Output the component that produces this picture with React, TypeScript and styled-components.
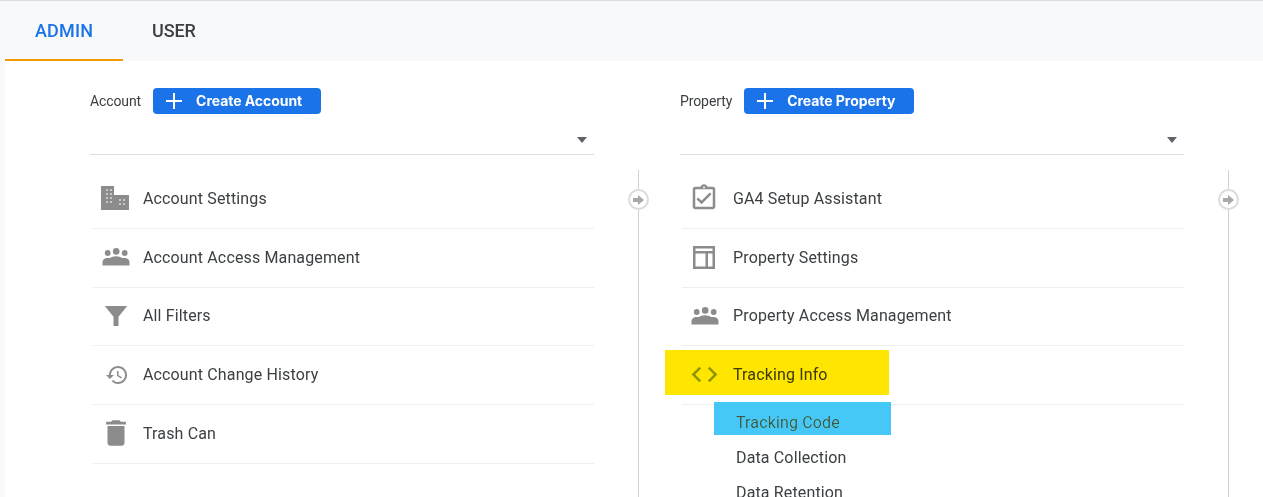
import styled, { createGlobalStyle } from 'styled-components'

const GlobalStyle = createGlobalStyle`
  html, body {
    margin: 0;
    height: 497px;
    overflow: hidden;
    background: #f8f9fa;
    font-family: Roboto, "Liberation Sans", sans-serif;
  }
`

const TabBar = styled.div`
  display: flex;
  height: 60px;
  padding-left: 5px;
  border-top: 1px solid #dadce0;
`

const Tab = styled.div<{ $active?: boolean }>`
  display: flex;
  align-items: center;
  padding: 0 30px;
  font-size: 18px;
  font-weight: 500;
  letter-spacing: ${(p) => (p.$active ? '0.15px' : '-0.1px')};
  color: ${(p) => (p.$active ? '#1a73e8' : '#3c4043')};
  border-bottom: 2px solid ${(p) => (p.$active ? '#f29900' : 'transparent')};

  & + & {
    padding-left: 29px;
  }
`

const Panel = styled.div`
  display: flex;
  height: 436px;
  margin-left: 5px;
  padding: 27px 0 0 85px;
  background: #fff;
`

const Column = styled.section`
  width: 590px;
  flex: none;
`

const ColumnHead = styled.div`
  display: flex;
  align-items: center;
  width: 504px;
  height: 26px;
`

const HeadLabel = styled.span`
  font-size: 14px;
  letter-spacing: -0.1px;
  color: #3c4043;
  margin-right: 12px;
`

const CreateButton = styled.div`
  display: flex;
  align-items: center;
  height: 26px;
  padding: 0 19px 2px 12px;
  box-sizing: border-box;
  border-radius: 4px;
  background: #1a73e8;
  color: #fff;
  font-family: Inter, Roboto, sans-serif;
  font-size: 14px;
  font-weight: 700;
  letter-spacing: -0.05px;

  svg {
    margin: 2px 13px 0 0;
  }
`

const Select = styled.div`
  display: flex;
  align-items: center;
  justify-content: flex-end;
  box-sizing: border-box;
  width: 504px;
  height: 25px;
  margin-top: 16px;
  padding: 0 7px 4px 0;
  border-bottom: 1px solid #dadce0;

  &::after {
    content: '';
    border-style: solid;
    border-width: 6px 5px 0;
    border-color: #5f6368 transparent transparent;
  }
`

const Body = styled.div`
  display: flex;
  margin-top: 15px;
`

const List = styled.div`
  box-sizing: border-box;
  width: 504px;
  padding-left: 2px;
`

const Row = styled.div`
  position: relative;
  display: flex;
  align-items: center;
  box-sizing: border-box;
  height: 58.75px;
  padding-bottom: 1px;
  border-bottom: 1px solid #eeeff0;
  font-size: 16px;
  letter-spacing: 0.14px;
  color: #3c4043;
`

// $w moves the icon sideways, the label stays at 51px from the row start
const IconSlot = styled.span<{ $w?: number; $color?: string }>`
  display: flex;
  align-items: center;
  justify-content: center;
  width: ${(p) => p.$w ?? 48}px;
  margin-right: ${(p) => 51 - (p.$w ?? 48)}px;
  color: ${(p) => p.$color ?? '#8c8c8c'};

  svg {
    display: block;
    flex: none;
    fill: currentColor;
  }
`

const SubRow = styled.div<{ $color?: string }>`
  position: relative;
  display: flex;
  align-items: center;
  height: 35px;
  padding-left: 54px;
  font-size: 16px;
  letter-spacing: 0.14px;
  color: ${(p) => p.$color ?? '#3c4043'};
`

// marker strokes someone painted on the screenshot, they tint the text below
const Marker = styled.span<{
  $color: string
  $left: number
  $top: number
  $w: number
  $h: number
  $blend: string
}>`
  position: absolute;
  left: ${(p) => p.$left}px;
  top: ${(p) => p.$top}px;
  width: ${(p) => p.$w}px;
  height: ${(p) => p.$h}px;
  background: ${(p) => p.$color};
  mix-blend-mode: ${(p) => p.$blend};
`

const Connector = styled.div`
  position: relative;
  flex: none;
  box-sizing: border-box;
  width: 45px;
  height: 330px;
  border-right: 1px solid #d0d2d4;
`

const ConnectorDot = styled.span`
  position: absolute;
  top: 19px;
  right: -11px;
  display: flex;
  align-items: center;
  justify-content: center;
  box-sizing: border-box;
  width: 21px;
  height: 21px;
  border: 2px solid #dadce0;
  border-radius: 50%;
  background: #fff;
  color: #a8a8a8;
`

const Plus = () => (
  <svg width='18' height='18' viewBox='0 0 18 18' fill='none' stroke='#fff' strokeWidth='2'>
    <path d='M9 1v16M1 9h16' />
  </svg>
)

const Arrow = () => (
  <svg width='11' height='10' viewBox='0 0 11 10' fill='currentColor'>
    <path d='M0 3h5V0l6 5-6 5V7H0z' />
  </svg>
)

const Domain = () => (
  <svg width='28' height='24' viewBox='0 0 28 24'>
    <path d='M0 0h13v9h15v15H0z' />
    <path
      d='M5 3h2v2H5zM9 3h2v2H9zM5 7h2v2H5zM9 7h2v2H9zM5 11h2v2H5zM9 11h2v2H9zM5 15h2v2H5zM9 15h2v2H9zM18 13h2v2h-2zM22 13h2v2h-2zM18 17h2v2h-2zM22 17h2v2h-2z'
      fill='#c8c8c8'
    />
  </svg>
)

const Groups = () => (
  <svg width='28' height='18' viewBox='0 0 28 18'>
    <circle cx='5.7' cy='5' r='2.9' />
    <circle cx='14.2' cy='3.4' r='3.3' />
    <circle cx='22.7' cy='5' r='2.900' />
    <path d='M.5 17.500v-3.500c0-2.200 2.300-4 5-4h2.500c1.500-1 3.800-1.700 6-1.700s4.500.7 6 1.700h2.500c2.700 0 5 1.800 5 4v3.500z' />
  </svg>
)

const Funnel = () => (
  <svg width='30' height='30' viewBox='0 0 24 24'>
    <path d='M3 4h18l-7 8.500V20h-4v-7.500z' />
  </svg>
)

const History = () => (
  <svg width='24' height='24' viewBox='0 0 24 24'>
    <path d='M13 3c-4.970 0-9 4.030-9 9H1l3.890 3.890.07.14L9 12H6c0-3.870 3.130-7 7-7s7 3.130 7 7-3.130 7-7 7c-1.930 0-3.680-.79-4.940-2.060l-1.420 1.420C8.270 19.990 10.510 21 13 21c4.970 0 9-4.030 9-9s-4.030-9-9-9zm-1 5v5l4.280 2.540.72-1.210-3.500-2.080V8H12z' />
  </svg>
)

const Trash = () => (
  <svg width='34' height='34' viewBox='0 0 24 24'>
    <path d='M6 19c0 1.100.9 2 2 2h8c1.100 0 2-.9 2-2V7H6v12zM19 4h-3.500l-1-1h-5l-1 1H5v2h14V4z' />
  </svg>
)

const Clipboard = () => (
  <svg width='30' height='30' viewBox='0 0 24 24'>
    <path d='M18 9l-1.410-1.420L10 14.170l-2.590-2.580L6 13l4 4zm1-6h-4.180C14.400 1.840 13.300 1 12 1c-1.300 0-2.400.84-2.820 2H5c-1.100 0-2 .9-2 2v14c0 1.100.9 2 2 2h14c1.100 0 2-.9 2-2V5c0-1.100-.9-2-2-2zm-7-.25c.41 0 .75.34.75.75s-.34.75-.75.75-.75-.34-.75-.75.34-.75.75-.75zM19 19H5V5h14v14z' />
  </svg>
)

const LayoutIcon = () => (
  <svg width='24' height='24' viewBox='0 0 24 24'>
    <path d='M1 1h22v23H1zM3.500 3.500v2.500h17V3.500zM3.500 8.500v13h10v-13zM16 8.500v13h4.500v-13z' fillRule='evenodd' />
  </svg>
)

const Code = () => (
  <svg width='31' height='31' viewBox='0 0 24 24'>
    <path d='M9.400 16.600L4.800 12l4.600-4.600L8 6l-6 6 6 6 1.400-1.400zm5.200 0l4.600-4.600-4.600-4.600L16 6l6 6-6 6-1.400-1.400z' />
  </svg>
)

const accountRows = [
  { label: 'Account Settings', icon: <Domain />, iconWidth: 46 },
  { label: 'Account Access Management', icon: <Groups /> },
  { label: 'All Filters', icon: <Funnel /> },
  { label: 'Account Change History', icon: <History />, iconWidth: 50 },
  { label: 'Trash Can', icon: <Trash /> },
]

const App = () => (
  <>
    <GlobalStyle />
    <TabBar>
      <Tab $active>ADMIN</Tab>
      <Tab>USER</Tab>
    </TabBar>
    <Panel>
      <Column>
        <ColumnHead>
          <HeadLabel>Account</HeadLabel>
          <CreateButton>
            <Plus />
            Create Account
          </CreateButton>
        </ColumnHead>
        <Select />
        <Body>
          <List>
            {accountRows.map((row) => (
              <Row key={row.label}>
                <IconSlot $w={row.iconWidth}>{row.icon}</IconSlot>
                {row.label}
              </Row>
            ))}
          </List>
          <Connector>
            <ConnectorDot>
              <Arrow />
            </ConnectorDot>
          </Connector>
        </Body>
      </Column>
      <Column>
        <ColumnHead>
          <HeadLabel>Property</HeadLabel>
          <CreateButton>
            <Plus />
            Create Property
          </CreateButton>
        </ColumnHead>
        <Select />
        <Body>
          <List>
            <Row>
              <IconSlot $w={44}>
                <Clipboard />
              </IconSlot>
              GA4 Setup Assistant
            </Row>
            <Row>
              <IconSlot $w={44}>
                <LayoutIcon />
              </IconSlot>
              Property Settings
            </Row>
            <Row>
              <IconSlot $w={46}>
                <Groups />
              </IconSlot>
              Property Access Management
            </Row>
            <Row>
              <IconSlot $w={44} $color='#8ca800'>
                <Code />
              </IconSlot>
              Tracking Info
              <Marker $color='#ffe600' $blend='multiply' $left={-17} $top={4} $w={224} $h={45} />
            </Row>
            <SubRow $color='#3f524c'>
              Tracking Code
              <Marker $color='#45c8f8' $blend='darken' $left={32} $top={-3} $w={177} $h={33} />
            </SubRow>
            <SubRow>Data Collection</SubRow>
            <SubRow>Data Retention</SubRow>
          </List>
          <Connector>
            <ConnectorDot>
              <Arrow />
            </ConnectorDot>
          </Connector>
        </Body>
      </Column>
    </Panel>
  </>
)

export default App
